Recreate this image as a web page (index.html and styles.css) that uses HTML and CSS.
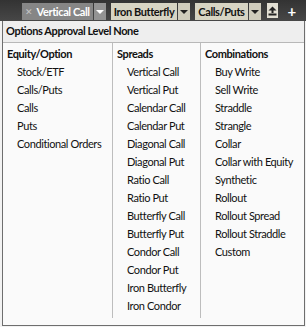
FILE: index.html
```html
<!DOCTYPE html>
<html lang="en">
<head>
  <meta charset="utf-8">
  <title>Order Types</title>
  <link rel="stylesheet" href="styles.css">
</head>
<body>
  <div class="tabbar">
    <div class="tab active">
      <span class="close">&#x2715;</span>
      <span class="label">Vertical Call</span>
    </div>
    <div class="arrow active"><span class="tri"></span></div>
    <div class="tab"><span class="label">Iron Butterfly</span></div>
    <div class="arrow"><span class="tri"></span></div>
    <div class="tab"><span class="label">Calls/Puts</span></div>
    <div class="arrow"><span class="tri"></span></div>
    <div class="iconbtn">
      <svg width="9" height="10" viewBox="0 0 9 10">
        <path d="M0.5 4.5 L4.5 0.5 L8.5 4.5 Z" fill="#222"/>
        <rect x="3.5" y="4" width="2" height="3" fill="#222"/>
        <rect x="0.5" y="7.5" width="8" height="2" fill="#222"/>
      </svg>
    </div>
    <div class="plus">+</div>
  </div>

  <div class="panel">
    <div class="panel-head">Options Approval Level None</div>
    <div class="columns">
      <div class="col col-equity">
        <div class="heading">Equity/Option</div>
        <div class="item">Stock/ETF</div>
        <div class="item">Calls/Puts</div>
        <div class="item">Calls</div>
        <div class="item">Puts</div>
        <div class="item">Conditional Orders</div>
      </div>
      <div class="col col-spreads">
        <div class="heading">Spreads</div>
        <div class="item">Vertical Call</div>
        <div class="item">Vertical Put</div>
        <div class="item">Calendar Call</div>
        <div class="item">Calendar Put</div>
        <div class="item">Diagonal Call</div>
        <div class="item">Diagonal Put</div>
        <div class="item">Ratio Call</div>
        <div class="item">Ratio Put</div>
        <div class="item">Butterfly Call</div>
        <div class="item">Butterfly Put</div>
        <div class="item">Condor Call</div>
        <div class="item">Condor Put</div>
        <div class="item">Iron Butterfly</div>
        <div class="item">Iron Condor</div>
      </div>
      <div class="col col-combos">
        <div class="heading">Combinations</div>
        <div class="item">Buy Write</div>
        <div class="item">Sell Write</div>
        <div class="item">Straddle</div>
        <div class="item">Strangle</div>
        <div class="item">Collar</div>
        <div class="item">Collar with Equity</div>
        <div class="item">Synthetic</div>
        <div class="item">Rollout</div>
        <div class="item">Rollout Spread</div>
        <div class="item">Rollout Straddle</div>
        <div class="item">Custom</div>
      </div>
    </div>
  </div>
</body>
</html>
```

FILE: styles.css
```css
* {
  margin: 0;
  padding: 0;
  box-sizing: border-box;
}

body {
  font-family: Lato, 'Noto Sans', sans-serif;
  font-size: 11px;
  letter-spacing: -0.4px;
  color: #111;
  background-color: #f2f2f2;
  width: 306px;
  height: 327px;
  overflow: hidden;
}

.tabbar {
  height: 21px;
  display: flex;
  align-items: flex-start;
  padding-top: 3px;
  padding-left: 22px;
  background: linear-gradient(#333, #474747);
  white-space: nowrap;
}

.tab {
  height: 17px;
  display: flex;
  align-items: center;
  gap: 4px;
  padding: 0 3px;
  background-color: #d7d4c3;
  font-weight: bold;
  color: #111;
}

.tab.active {
  background-color: #868686;
  color: #fff;
}

.close {
  color: #c4c4c4;
  font-size: 9px;
  font-weight: normal;
}

.arrow {
  width: 12px;
  height: 17px;
  margin-left: 1px;
  margin-right: 5px;
  display: flex;
  align-items: center;
  justify-content: center;
  background-color: #cfccbc;
}

.arrow.active {
  background-color: #939393;
}

.tri {
  width: 0;
  height: 0;
  border-left: 4px solid transparent;
  border-right: 4px solid transparent;
  border-top: 4px solid #222;
}

.arrow.active .tri {
  border-top-color: #fff;
}

.iconbtn {
  width: 11px;
  height: 15px;
  margin-left: 1px;
  display: flex;
  align-items: center;
  justify-content: center;
  background-color: #e2dfd3;
}

.plus {
  margin-left: 10px;
  color: #fff;
  font-size: 15px;
  font-weight: bold;
  line-height: 16px;
}

.panel {
  margin-left: 2px;
  width: 303px;
  height: 305px;
  border: 1px solid #6e6e6e;
  border-top: none;
  background-color: #fafafa;
  display: flex;
  flex-direction: column;
}

.panel-head {
  height: 22px;
  line-height: 20px;
  padding-left: 3px;
  font-weight: bold;
  background-color: #eeeeee;
  border-bottom: 1px solid #b8b8b8;
}

.columns {
  display: flex;
  height: 275px;
}

.col {
  padding-top: 2px;
  padding-left: 4px;
  border-right: 1px solid #bdbdbd;
}

.col-equity {
  width: 110px;
}

.col-spreads {
  width: 88px;
}

.col-combos {
  flex: 1;
  border-right: none;
}

.heading {
  height: 18px;
  line-height: 18px;
  font-weight: bold;
}

.item {
  height: 18px;
  line-height: 18px;
  padding-left: 10px;
  white-space: nowrap;
}
```
